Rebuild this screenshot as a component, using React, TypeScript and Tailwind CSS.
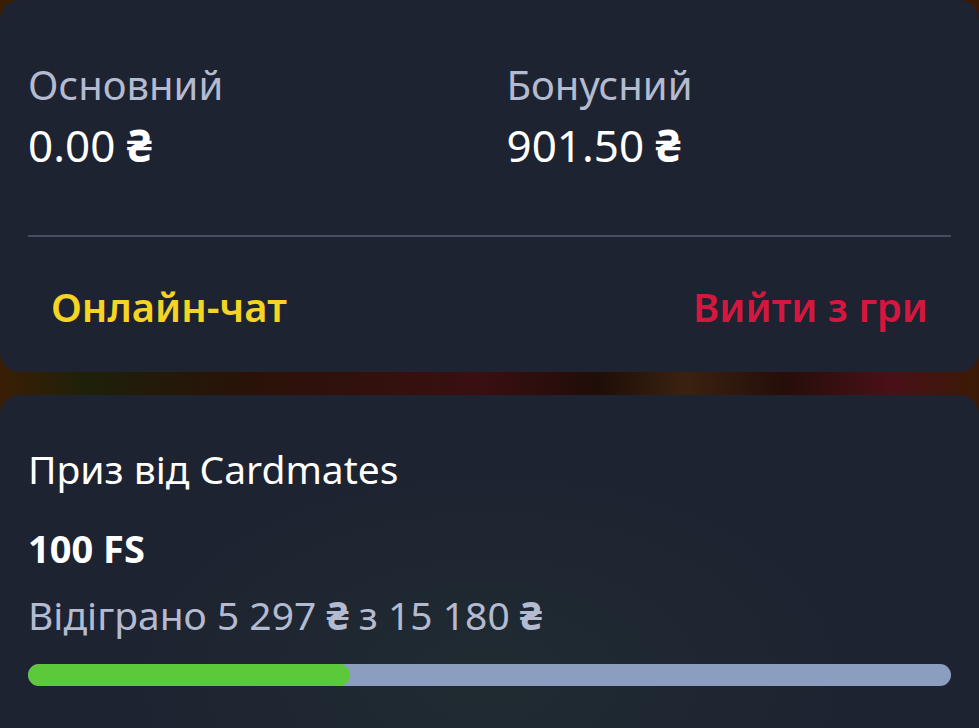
import React from 'react';

const balances = [
  { label: 'Основний', value: '0.00' },
  { label: 'Бонусний', value: '901.50' },
];

const wagered = 5297;
const target = 15180;

const Uah: React.FC = () => <span className="font-bold">₴</span>;

const App: React.FC = () => {
  const pct = (wagered / target) * 100;

  return (
    <div
      className="min-h-screen w-full overflow-hidden bg-[linear-gradient(90deg,#3a1e05_0%,#1e200a_9%,#2a1208_25%,#3a0f12_49%,#1f0d08_61%,#3a2210_70%,#250e0a_80%,#4a1018_91%,#3a1a06_100%)]"
      style={{ fontFamily: '"Noto Sans", "Open Sans", sans-serif' }}
    >
      {/* Balance card */}
      <section className="rounded-[20px] bg-[#1d2331] px-7 pt-[60px] pb-[40px]">
        <div className="grid grid-cols-2 gap-x-[34px]">
          {balances.map((b) => (
            <div key={b.label}>
              <div className="text-[40px] leading-[50px] text-[#b4bbd1]">{b.label}</div>
              <div className="mt-[10px] text-[44px] leading-[50px] text-white">
                {b.value} <Uah />
              </div>
            </div>
          ))}
        </div>

        <div className="mt-[65px] h-[2px] bg-[#474e5f]" />

        {/* Actions */}
        <div className="mt-[45px] flex items-center justify-between px-[23px]">
          <button className="text-[40px] font-semibold leading-[50px] text-[#f6d423]">Онлайн-чат</button>
          <button className="text-[40px] font-semibold leading-[50px] text-[#d5173f]">Вийти з гри</button>
        </div>
      </section>

      {/* Prize card */}
      <section className="mt-[23px] rounded-t-[20px] bg-[#1d2331] bg-[radial-gradient(ellipse_at_50%_85%,#202b31_0%,#1d2331_60%)] px-7 pt-[49px] pb-[42px]">
        <div className="text-[39px] leading-[50px] text-white">Приз від Cardmates</div>
        <div className="mt-[31px] text-[38px] font-bold leading-[46px] text-white">100 FS</div>
        <div className="mt-[19px] text-[39px] leading-[50px] text-[#b4bbd1]">
          Відіграно 5 297 <Uah /> з 15 180 <Uah />
        </div>
        <div className="mt-[24px] h-[22px] w-full overflow-hidden rounded-full bg-[#8c9ebf]">
          <div className="h-full rounded-full bg-[#5cc93a]" style={{ width: `${pct}%` }} />
        </div>
      </section>
    </div>
  );
};

export default App;
